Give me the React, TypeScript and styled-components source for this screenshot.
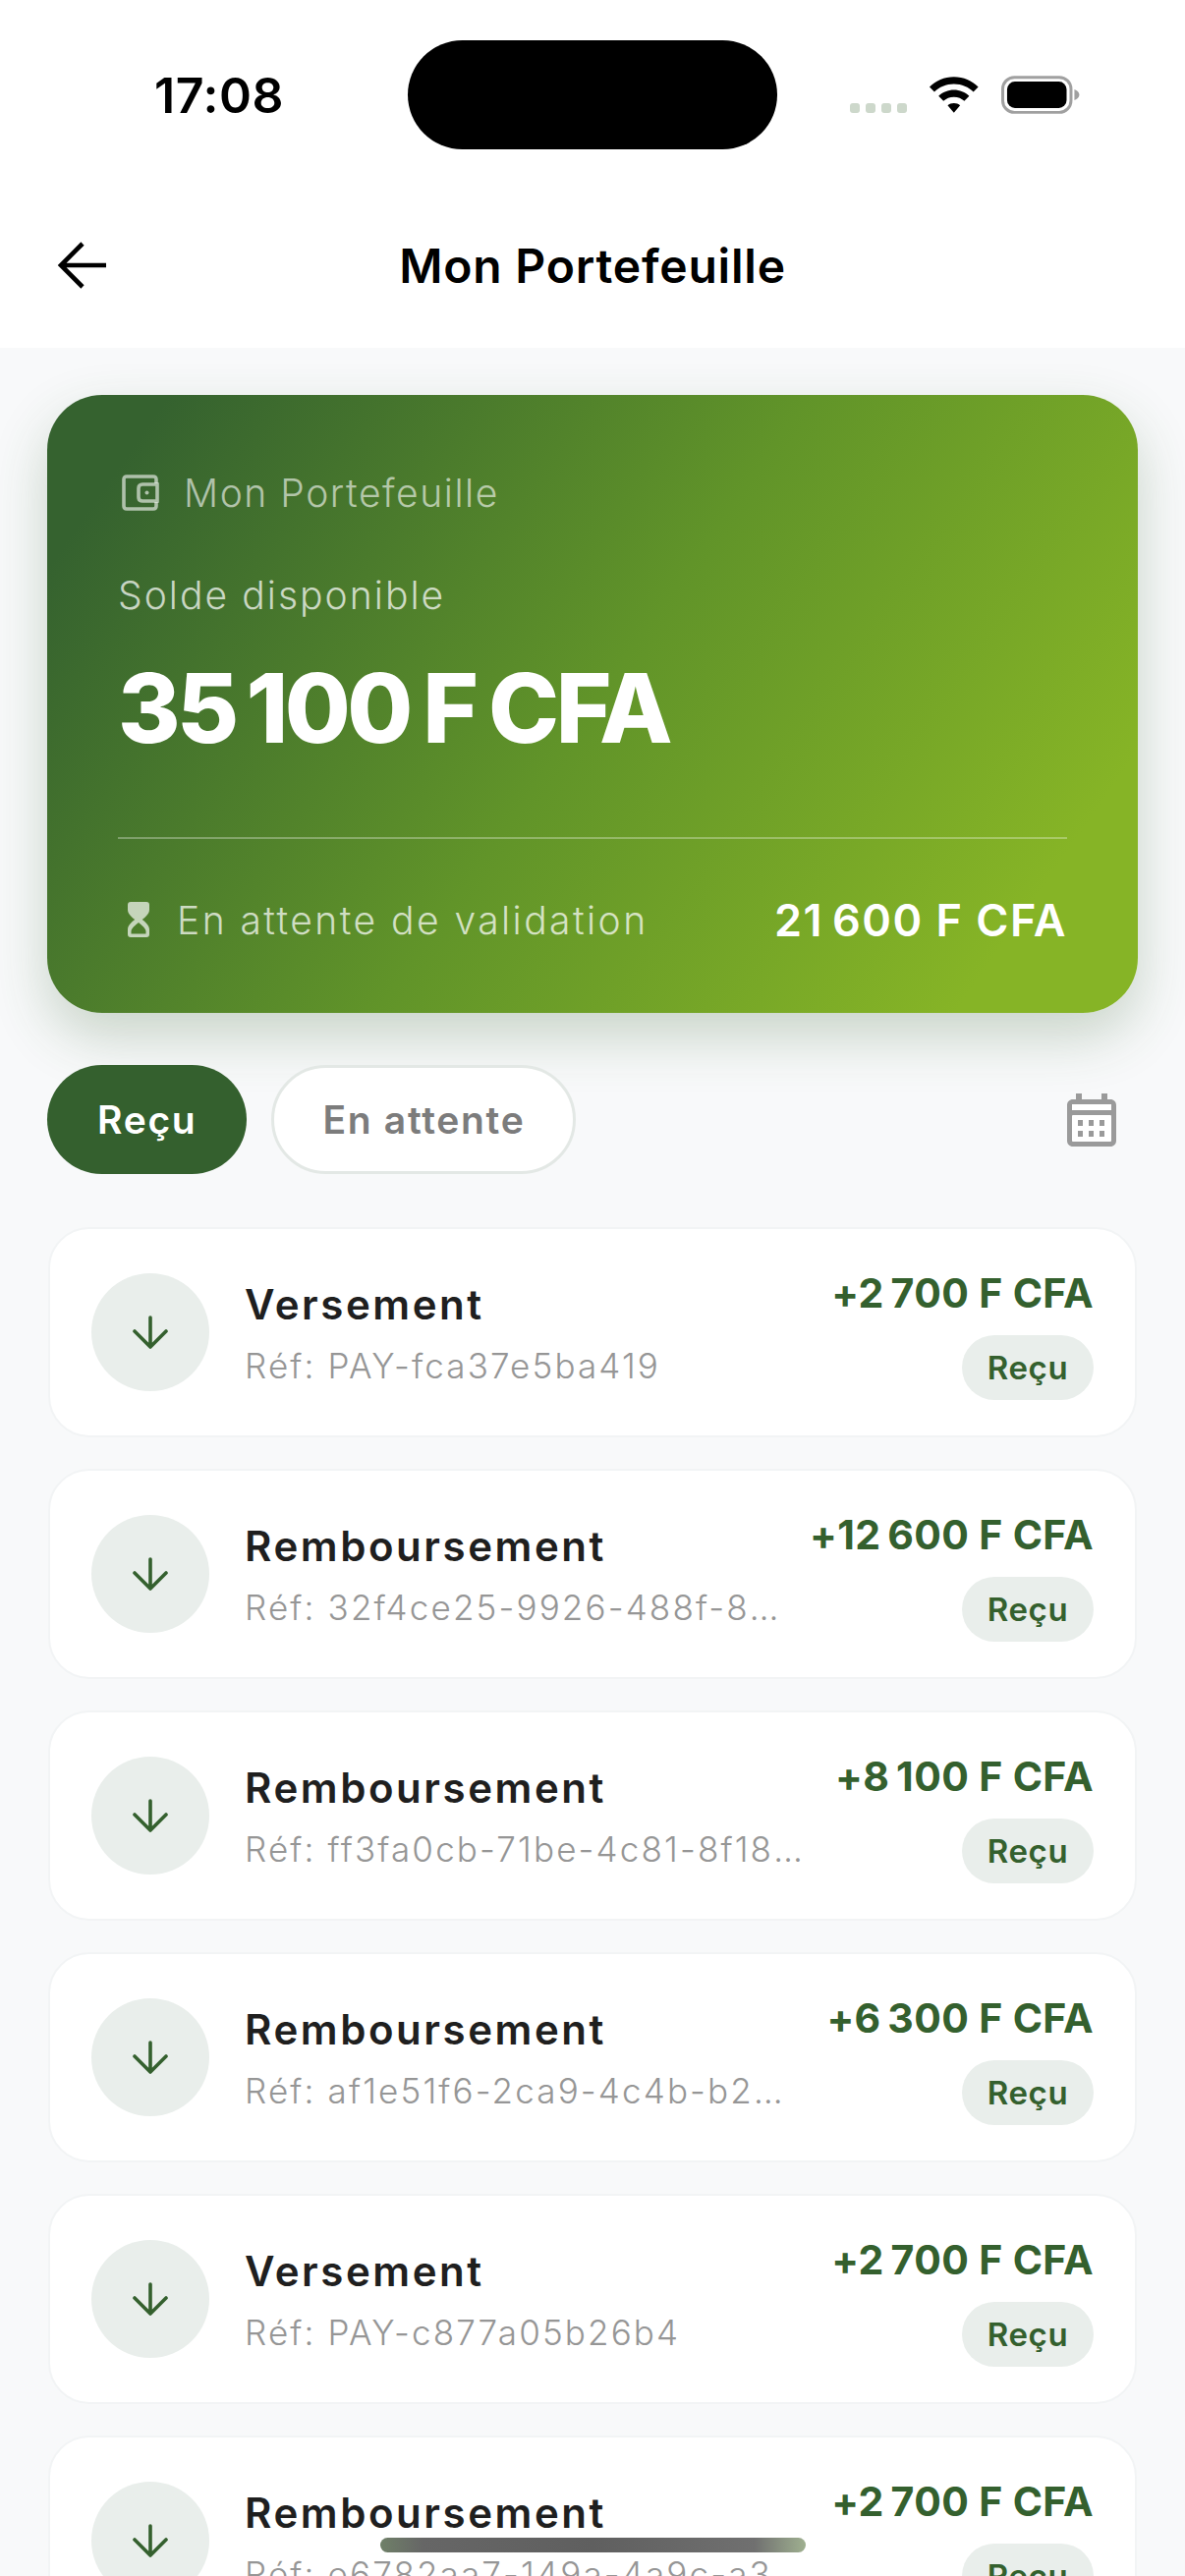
import React from "react";
import styled, { createGlobalStyle } from "styled-components";

const Global = createGlobalStyle`
  html, body { margin: 0; padding: 0; background: #f8f9fa; }
  * { box-sizing: border-box; }
  body { font-family: Inter, "Noto Sans", sans-serif; }
`;

const Page = styled.div`
  position: relative;
  width: 1206px;
  height: 2622px;
  overflow: hidden;
  background: #f8f9fa;
`;

const Top = styled.header`
  background: #fff;
  height: 354px;
`;

const StatusBar = styled.div`
  height: 186px;
  padding: 41px 106px 0 157px;
  display: flex;
  align-items: flex-start;
  justify-content: space-between;
`;

const Time = styled.div`
  width: 131px;
  height: 111px;
  display: flex;
  align-items: center;
  font-size: 50px;
  font-weight: 600;
  letter-spacing: 0.6px;
  white-space: nowrap;
  color: #000;
`;

const Notch = styled.div`
  width: 376px;
  height: 111px;
  margin-left: 127px;
  border-radius: 56px;
  background: #000;
`;

const StatusIcons = styled.div`
  width: 235px;
  height: 111px;
  margin-left: 74px;
  display: flex;
  align-items: center;
  gap: 22px;
`;

const Dots = styled.div`
  display: flex;
  gap: 6px;
  margin-top: 26px;
`;

const Dot = styled.span`
  width: 10px;
  height: 10px;
  border-radius: 3px;
  background: #cdd8cb;
`;

const NavBar = styled.div`
  height: 168px;
  position: relative;
  display: flex;
  align-items: center;
  justify-content: center;
`;

const BackButton = styled.div`
  position: absolute;
  left: 58px;
  top: 59px;
  display: flex;
`;

const Title = styled.h1`
  margin: 0;
  font-size: 48px;
  font-weight: 600;
  letter-spacing: 0.8px;
  color: #000;
`;

const Content = styled.main`
  padding: 48px 48px 0;
`;

const Balance = styled.section`
  height: 629px;
  padding: 76px 72px 0;
  border-radius: 56px;
  background: linear-gradient(125deg, #35622f 8%, #619429 50%, #86b426 88%);
  box-shadow: 0 24px 56px rgba(50, 96, 46, 0.24);
  color: #fff;
`;

const WalletRow = styled.div`
  display: flex;
  align-items: center;
  gap: 25px;
  padding-left: 4px;
  height: 46px;
  font-size: 39px;
  font-weight: 300;
  letter-spacing: 1.55px;
  color: rgba(255, 255, 255, 0.6);
`;

const Available = styled.div`
  margin-top: 59px;
  height: 46px;
  line-height: 46px;
  font-size: 39px;
  font-weight: 300;
  letter-spacing: 2.05px;
  color: rgba(255, 255, 255, 0.72);
`;

const Amount = styled.div`
  margin-top: 33px;
  height: 118px;
  line-height: 118px;
  font-size: 97px;
  font-weight: 800;
  letter-spacing: -3.6px;
  word-spacing: -4px;
`;

const Divider = styled.div`
  height: 2px;
  margin-top: 72px;
  background: rgba(255, 255, 255, 0.3);
`;

const Pending = styled.div`
  margin-top: 57px;
  height: 50px;
  display: flex;
  align-items: center;
`;

const PendingLabel = styled.span`
  margin-left: 28px;
  font-size: 39px;
  font-weight: 300;
  letter-spacing: 2.45px;
  white-space: nowrap;
  color: rgba(255, 255, 255, 0.72);
`;

const PendingAmount = styled.span`
  margin-left: auto;
  font-size: 45px;
  font-weight: 600;
  letter-spacing: 1.5px;
  white-space: nowrap;
`;

const HourglassWrap = styled.span`
  display: flex;
  margin-left: 10px;
`;

const Tabs = styled.div`
  margin-top: 53px;
  display: flex;
  align-items: center;
  gap: 25px;
`;

const Tab = styled.div<{ $active?: boolean }>`
  height: 111px;
  padding: 0 ${(p) => (p.$active ? 51 : 49)}px;
  border-radius: 56px;
  display: flex;
  align-items: center;
  font-size: 39px;
  font-weight: 600;
  letter-spacing: 1.7px;
  background: ${(p) => (p.$active ? "#34602e" : "#fff")};
  color: ${(p) => (p.$active ? "#fff" : "#7c7c7c")};
  border: ${(p) => (p.$active ? "none" : "3px solid #e3e8e5")};
`;

const CalendarWrap = styled.div`
  margin-left: auto;
  margin-right: 22px;
  display: flex;
  margin-top: 1px;
`;

const List = styled.div`
  margin-top: 54px;
  padding: 0 1px;
  display: flex;
  flex-direction: column;
  gap: 32px;
`;

const Row = styled.article`
  height: 214px;
  flex: none;
  padding: 45px 42px 0 42px;
  display: flex;
  align-items: flex-start;
  border-radius: 42px;
  background: #fff;
  border: 2px solid #f2f4f5;
`;

const Circle = styled.div`
  flex: none;
  width: 120px;
  height: 120px;
  border-radius: 50%;
  background: #e9eeeb;
  display: flex;
  align-items: center;
  justify-content: center;
`;

const Info = styled.div`
  flex: 1;
  min-width: 0;
  margin-left: 36px;
  padding-top: 4px;
`;

const RowTitle = styled.div`
  height: 56px;
  line-height: 56px;
  font-size: 42px;
  font-weight: 600;
  letter-spacing: 2.55px;
  color: #1f1f1f;
`;

const Ref = styled.div`
  margin-top: 11px;
  height: 46px;
  line-height: 46px;
  font-size: 35px;
  font-weight: 300;
  letter-spacing: 2.15px;
  color: #969696;
  white-space: nowrap;
  overflow: hidden;
  text-overflow: ellipsis;
`;

const Right = styled.div`
  flex: none;
  margin-left: 26px;
  display: flex;
  flex-direction: column;
  align-items: flex-end;
`;

const Plus = styled.div`
  height: 44px;
  line-height: 44px;
  margin-top: -2px;
  font-size: 41px;
  font-weight: 700;
  letter-spacing: 0.35px;
  color: #34602e;
  white-space: nowrap;
`;

const Badge = styled.div`
  margin-top: 21px;
  width: 134px;
  height: 66px;
  border-radius: 33px;
  background: #e9eeeb;
  display: flex;
  align-items: center;
  justify-content: center;
  font-size: 33px;
  font-weight: 600;
  letter-spacing: 0.6px;
  color: #34602e;
`;

const HomeIndicator = styled.div`
  position: absolute;
  left: 387px;
  top: 2583px;
  width: 433px;
  height: 15px;
  border-radius: 8px;
  background: linear-gradient(90deg, #6f8068 0%, #666 10%, #5f5f5f 50%, #707070 88%, #9fb090 100%);
`;

const ArrowDown = () => (
  <svg width="36" height="34" viewBox="0 0 36 34" fill="none" stroke="#34602e" strokeWidth="3.6" strokeLinecap="round" strokeLinejoin="round">
    <path d="M18 2V31M2 16L18 32L34 16" />
  </svg>
);

const rows = [
  { title: "Versement", ref: "Réf: PAY-fca37e5ba419", amount: "+2\u202f700 F CFA" },
  { title: "Remboursement", ref: "Réf: 32f4ce25-9926-488f-8a1c-7d0e2b4f6a31", amount: "+12\u202f600 F CFA" },
  { title: "Remboursement", ref: "Réf: ff3fa0cb-71be-4c81-8f18-2a9e6d1c5b07", amount: "+8\u202f100 F CFA" },
  { title: "Remboursement", ref: "Réf: af1e51f6-2ca9-4c4b-b2d7-93e1f0a8c642", amount: "+6\u202f300 F CFA" },
  { title: "Versement", ref: "Réf: PAY-c877a05b26b4", amount: "+2\u202f700 F CFA" },
  { title: "Remboursement", ref: "Réf: e6782aa7-149a-4a9c-a3d1-58c7e2f9b014", amount: "+2\u202f700 F CFA" },
];

export default function App() {
  return (
    <Page>
      <Global />
      <Top>
        <StatusBar>
          <Time>17:08</Time>
          <Notch />
          <StatusIcons>
            <Dots>
              <Dot />
              <Dot />
              <Dot />
              <Dot />
            </Dots>
            <svg width="52" height="38" viewBox="0 0 52 38">
              <path d="M26 0C16 0 7.5 3.8 1 10.5L6 15.5C11 10.4 18 7.3 26 7.3S41 10.4 46 15.5L51 10.5C44.500 3.800 36 0 26 0Z" />
              <path d="M26 13.500C20 13.500 14.500 15.800 10.300 19.800L15.300 24.800C18 22.300 21.800 20.700 26 20.700S34 22.300 36.700 24.800L41.700 19.800C37.500 15.800 32 13.500 26 13.500Z" />
              <path d="M26 27C23.500 27 21.300 27.900 19.600 29.300L26 37L32.400 29.300C30.700 27.900 28.500 27 26 27Z" />
            </svg>
            <svg width="82" height="40" viewBox="0 0 82 40">
              <rect x="1.5" y="1.500" width="70" height="36" rx="12" fill="none" stroke="#a0a0a0" strokeWidth="3" />
              <rect x="6" y="6" width="61" height="27" rx="8" fill="#000" />
              <path d="M75 14C78 15 80 17 80 19.500S78 24 75 25Z" fill="#a0a0a0" />
            </svg>
          </StatusIcons>
        </StatusBar>
        <NavBar>
          <BackButton>
            <svg width="52" height="50" viewBox="0 0 52 50" fill="none" stroke="#000" strokeWidth="4.6" strokeLinecap="butt" strokeLinejoin="miter">
              <path d="M50 25H6M26 3L4 25L26 47" />
            </svg>
          </BackButton>
          <Title>Mon Portefeuille</Title>
        </NavBar>
      </Top>
      <Content>
        <Balance>
          <WalletRow>
            <svg width="38" height="37" viewBox="0 0 38 37" fill="none" stroke="rgba(255,255,255,0.6)" strokeWidth="3.6">
              <path d="M35 9V5C35 3 34 2 32 2H5C3 2 2 3 2 5V32C2 34 3 35 5 35H32C34 35 35 34 35 32V28" />
              <path d="M36 10H21C18.500 10 17 11.500 17 14V23C17 25.500 18.500 27 21 27H36Z" />
              <circle cx="25.500" cy="18.500" r="2" fill="rgba(255,255,255,0.6)" stroke="none" />
            </svg>
            <span>Mon Portefeuille</span>
          </WalletRow>
          <Available>Solde disponible</Available>
          <Amount>35{"\u202f"}100 F CFA</Amount>
          <Divider />
          <Pending>
            <HourglassWrap>
              <svg width="22" height="36" viewBox="0 0 22 36" fill="rgba(255,255,255,0.68)">
                <path
                  fillRule="evenodd"
                  d="M3 0H19C21 0 22 1 22 3V8C22 12 18 15.500 14.800 18C18 20.500 22 24 22 28V33C22 35 21 36 19 36H3C1 36 0 35 0 33V28C0 24 4 20.500 7.200 18C4 15.500 0 12 0 8V3C0 1 1 0 3 0ZM11 21C8 23.500 3.500 27 3.500 30V32.500H18.500V30C18.500 27 14 23.500 11 21Z"
                />
              </svg>
            </HourglassWrap>
            <PendingLabel>En attente de validation</PendingLabel>
            <PendingAmount>21{"\u202f"}600 F CFA</PendingAmount>
          </Pending>
        </Balance>
        <Tabs>
          <Tab $active>Reçu</Tab>
          <Tab>En attente</Tab>
          <CalendarWrap>
            <svg width="50" height="54" viewBox="0 0 50 54" fill="none">
              <path d="M9 0H15V6H35V0H41V6H44C47.500 6 50 8.500 50 12V48C50 51.500 47.500 54 44 54H6C2.500 54 0 51.500 0 48V12C0 8.500 2.500 6 6 6H9Z" fill="#9a9a9a" />
              <rect x="5" y="11" width="40" height="6" fill="#fff" />
              <rect x="5" y="22" width="40" height="27" rx="1" fill="#fff" />
              <g fill="#9a9a9a">
                <rect x="11" y="27" width="5" height="6" />
                <rect x="22" y="27" width="5" height="6" />
                <rect x="33" y="27" width="5" height="6" />
                <rect x="11" y="38" width="5" height="6" />
                <rect x="22" y="38" width="5" height="6" />
                <rect x="33" y="38" width="5" height="6" />
              </g>
            </svg>
          </CalendarWrap>
        </Tabs>
        <List>
          {rows.map((r, i) => (
            <Row key={i}>
              <Circle>
                <ArrowDown />
              </Circle>
              <Info>
                <RowTitle>{r.title}</RowTitle>
                <Ref>{r.ref}</Ref>
              </Info>
              <Right>
                <Plus>{r.amount}</Plus>
                <Badge>Reçu</Badge>
              </Right>
            </Row>
          ))}
        </List>
      </Content>
      <HomeIndicator />
    </Page>
  );
}
